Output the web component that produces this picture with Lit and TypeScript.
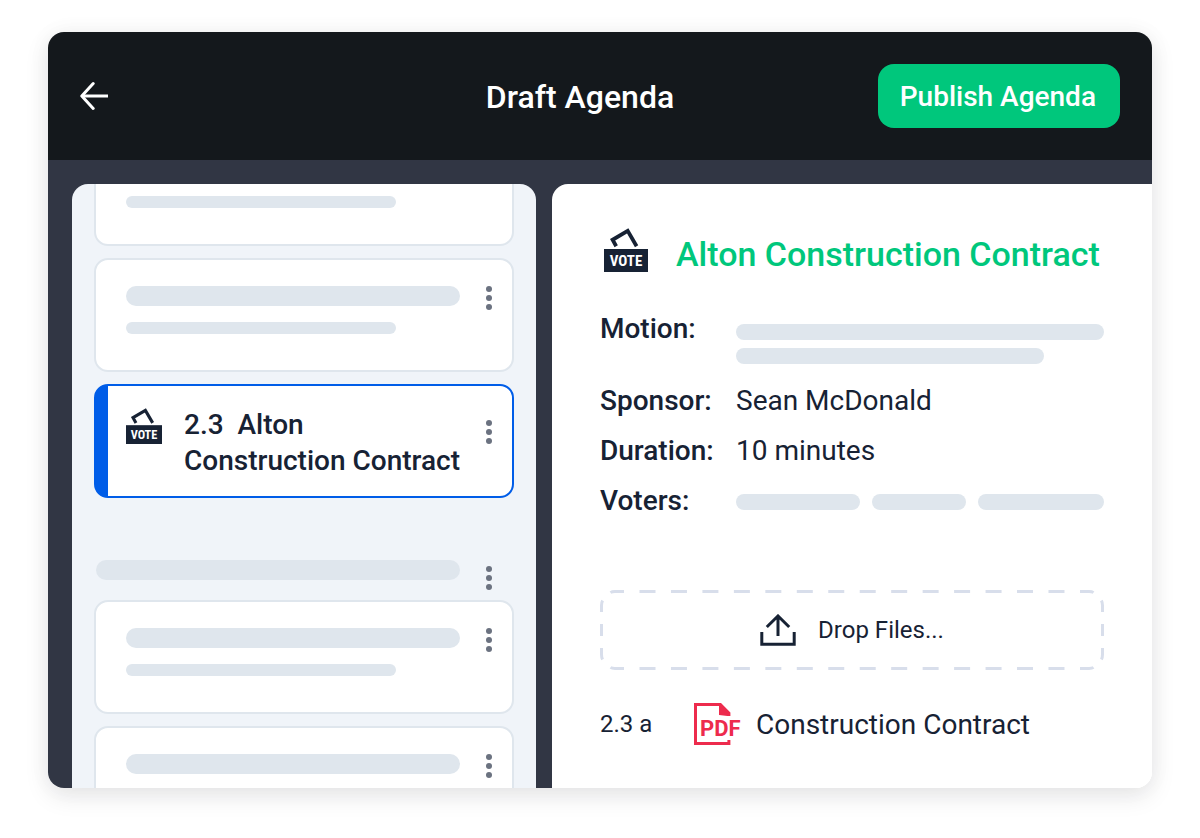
import { LitElement, html, svg, css } from "lit";
import { customElement, property } from "lit/decorators.js";

@customElement("vote-icon")
class VoteIcon extends LitElement {
  static styles = css`
    :host { display: block; flex: none; }
    .icon { display: block; width: 100%; height: 100%; }
    .box { fill: #172234; }
    .paper { fill: none; stroke: #172234; stroke-width: 3.8; }
    .word { fill: #fff; font: 700 15px "Roboto Condensed", "Liberation Sans Narrow", Roboto, sans-serif; text-anchor: middle; }
  `;
  render() {
    return html`<svg class="icon" viewBox="0 0 44 44" role="img" aria-label="Vote">
      <path class="paper" d="M12.2 18.2 L8.6 11.8 L23.7 2.9 L32.6 18.2" />
      <rect class="box" y="21" width="44" height="23" />
      <text class="word" x="22" y="38">VOTE</text>
    </svg>`;
  }
}

@customElement("more-button")
class MoreButton extends LitElement {
  static styles = css`
    :host { display: block; flex: none; }
    .more { display: grid; gap: 3px; padding: 0; border: 0; background: none; cursor: pointer; }
    .dot { width: 6px; height: 6px; border-radius: 50%; background: #6b7280; }
  `;
  render() {
    return html`<button class="more" aria-label="More options">
      <span class="dot"></span><span class="dot"></span><span class="dot"></span>
    </button>`;
  }
}

@customElement("agenda-card")
class AgendaCard extends LitElement {
  @property() number = "";
  @property() name = "";
  static styles = css`
    :host { display: block; }
    .card {
      box-sizing: border-box; min-height: 114px; display: flex; align-items: flex-start;
      background: #fff; border: 2px solid #dfe6ed; border-radius: 14px; padding: 26px 20px 0 30px;
    }
    .lines { flex: 1; display: grid; gap: 16px; margin-right: 26px; }
    .line { height: 20px; border-radius: 10px; background: #dfe6ed; }
    .short { height: 12px; border-radius: 6px; width: 270px; max-width: 81%; }
    .selected { border-color: #005de8; border-left-width: 14px; padding: 21px 20px 17px 18px; }
    .icon { width: 36px; height: 36px; margin: 1px 22px 0 0; }
    .name { flex: 1; margin: 0 24px 0 0; color: #172234; font-size: 28px; line-height: 36px; font-weight: 500; white-space: pre-wrap; }
    .more { margin-top: 13px; }
  `;
  render() {
    if (this.name) {
      return html`<article class="card selected">
        <vote-icon class="icon"></vote-icon>
        <h2 class="name">${`${this.number}  ${this.name}`}</h2>
        <more-button class="more"></more-button>
      </article>`;
    }
    return html`<article class="card">
      <div class="lines"><div class="line"></div><div class="line short"></div></div>
      <more-button></more-button>
    </article>`;
  }
}

@customElement("app-root")
class AppRoot extends LitElement {
  static styles = css`
    :host {
      box-sizing: border-box; display: flex; flex-direction: column; height: 100vh; min-height: 560px;
      padding: 32px 48px 50px; background: #fff; color: #172234; font-family: Roboto, sans-serif;
    }
    .frame {
      flex: 1; min-height: 0; display: flex; flex-direction: column; overflow: hidden;
      border-radius: 16px;
      box-shadow: 0 8px 24px rgba(20, 24, 28, 0.1), 0 0 24px rgba(20, 24, 28, 0.04);
    }
    .header {
      display: grid; grid-template-columns: 1fr auto 1fr; align-items: center;
      padding: 32px; background: #14181c; color: #fff;
    }
    .back { justify-self: start; padding: 0; border: 0; background: none; cursor: pointer; }
    .arrow { display: block; width: 28px; height: 28px; fill: none; stroke: #fff; stroke-width: 3; stroke-linecap: round; stroke-linejoin: round; }
    .title { margin: 0; padding: 2px 40px 0 0; font-size: 32px; line-height: 40px; font-weight: 500; }
    .publish {
      justify-self: end; height: 64px; padding: 2px 24px 0 22px; border: 0; border-radius: 16px; cursor: pointer;
      background: #00c77c; color: #fff; font: 500 28px/36px Roboto, sans-serif;
    }
    .body {
      flex: 1; min-height: 0; display: grid; grid-template-columns: 464fr 600fr; gap: 16px;
      padding-left: 24px; border-top: 24px solid #313644;
      background: linear-gradient(90deg, #313644 60%, #fff 60%);
    }
    .list { min-height: 0; overflow: hidden; padding: 0 22px; border-radius: 16px 16px 0 0; background: #f0f4f9; }
    .items { display: grid; gap: 12px; margin-top: -52px; }
    .section { display: flex; align-items: flex-start; margin-top: 50px; padding: 0 22px 0 2px; height: 28px; }
    .section-line { flex: 1; height: 20px; margin-right: 26px; border-radius: 10px; background: #dfe6ed; }
    .section-more { margin-top: 6px; }
    .detail { min-height: 0; overflow: hidden; padding: 44px 48px; border-radius: 16px 0 0 0; background: #fff; }
    .heading { display: flex; align-items: flex-start; gap: 28px; padding-left: 4px; }
    .vote { width: 44px; height: 44px; }
    .name { margin: 0; font-size: 34px; line-height: 44px; font-weight: 500; color: #00c77c; padding-top: 4px; white-space: nowrap; }
    .facts { display: grid; grid-template-columns: 136px 1fr; row-gap: 14px; margin: 35px 0 0; font-size: 28px; line-height: 36px; }
    .term { font-weight: 500; }
    .value { margin: 0; }
    .motion { display: grid; align-content: start; gap: 8px; padding: 13px 0 5px; }
    .bar { height: 16px; border-radius: 8px; background: #dfe6ed; }
    .bar-short { width: 308px; max-width: 84%; }
    .voters { display: grid; grid-template-columns: 124fr 94fr 126fr; gap: 12px; padding-top: 11px; }
    .drop {
      position: relative; box-sizing: border-box; width: 100%; height: 80px; margin-top: 71px; padding: 0;
      display: flex; align-items: center; justify-content: center; gap: 22px;
      border: 0; background: none; color: inherit; font: 400 24px/32px Roboto, sans-serif; cursor: pointer;
    }
    .dashes { position: absolute; inset: 0; width: 100%; height: 100%; fill: none; stroke: #d8deeb; stroke-width: 3; }
    .edge { stroke-dasharray: 16 15.46; }
    .upload { width: 36px; height: 32px; fill: none; stroke: #172234; stroke-width: 3; }
    .file { display: flex; align-items: center; margin-top: 32px; }
    .file-num { width: 94px; font-size: 24px; line-height: 32px; }
    .pdf { width: 48px; height: 42px; margin-right: 14px; fill: #ed2b4d; }
    .pdf-word { font: 700 22px Roboto, sans-serif; }
    .file-link { color: inherit; text-decoration: none; font-size: 28px; line-height: 42px; padding-top: 2px; }
  `;

  private corner(transform: string) {
    return svg`<path transform=${transform} d="M24 1.5H15Q12 1.5 10.5 2.6M1.5 22V15.5Q1.5 12.5 2.6 10.5M1.5 34V40" />`;
  }

  render() {
    return html`<main class="frame">
      <header class="header">
        <button class="back" aria-label="Back">
          <svg class="arrow" viewBox="0 0 28 28"><path d="M13.2 1.6L1.8 14L13.2 26.4" /><path stroke-linecap="butt" d="M2 14H28" /></svg>
        </button>
        <h1 class="title">Draft Agenda</h1>
        <button class="publish">Publish Agenda</button>
      </header>
      <div class="body">
        <section class="list" aria-label="Agenda items">
          <div class="items">
            <agenda-card></agenda-card>
            <agenda-card></agenda-card>
            <agenda-card number="2.3" name="Alton Construction Contract"></agenda-card>
            <div class="section"><div class="section-line"></div><more-button class="section-more"></more-button></div>
            <agenda-card></agenda-card>
            <agenda-card></agenda-card>
          </div>
        </section>
        <section class="detail">
          <div class="heading"><vote-icon class="vote"></vote-icon><h2 class="name">Alton Construction Contract</h2></div>
          <dl class="facts">
            <dt class="term">Motion:</dt>
            <dd class="value motion"><div class="bar"></div><div class="bar bar-short"></div></dd>
            <dt class="term">Sponsor:</dt><dd class="value">Sean McDonald</dd>
            <dt class="term">Duration:</dt><dd class="value">10 minutes</dd>
            <dt class="term">Voters:</dt>
            <dd class="value voters"><div class="bar"></div><div class="bar"></div><div class="bar"></div></dd>
          </dl>
          <button class="drop">
            <svg class="dashes" viewBox="0 0 504 80" preserveAspectRatio="none" aria-hidden="true">
              <path class="edge" d="M39.5 1.5H465M39.5 78.5H465" />
              ${this.corner("")}${this.corner("matrix(-1 0 0 1 504 0)")}
              ${this.corner("matrix(1 0 0 -1 0 80)")}${this.corner("matrix(-1 0 0 -1 504 80)")}
            </svg>
            <svg class="upload" viewBox="0 0 36 32" aria-hidden="true">
              <path d="M1.8 18V30.2H34.2V18" /><path d="M18 22V2.5M6.8 13L18 2L29.2 13" />
            </svg>
            <span>Drop Files...</span>
          </button>
          <div class="file">
            <span class="file-num">2.3 a</span>
            <svg class="pdf" viewBox="0 0 48 42" aria-hidden="true">
              <path d="M0 0H27L36.4 9.4V13H33.4L25 12V3H3V39H33.4V37H36.4V42H0Z" />
              <text class="pdf-word" x="6" y="33">PDF</text>
            </svg>
            <a class="file-link" href="#">Construction Contract</a>
          </div>
        </section>
      </div>
    </main>`;
  }
}
